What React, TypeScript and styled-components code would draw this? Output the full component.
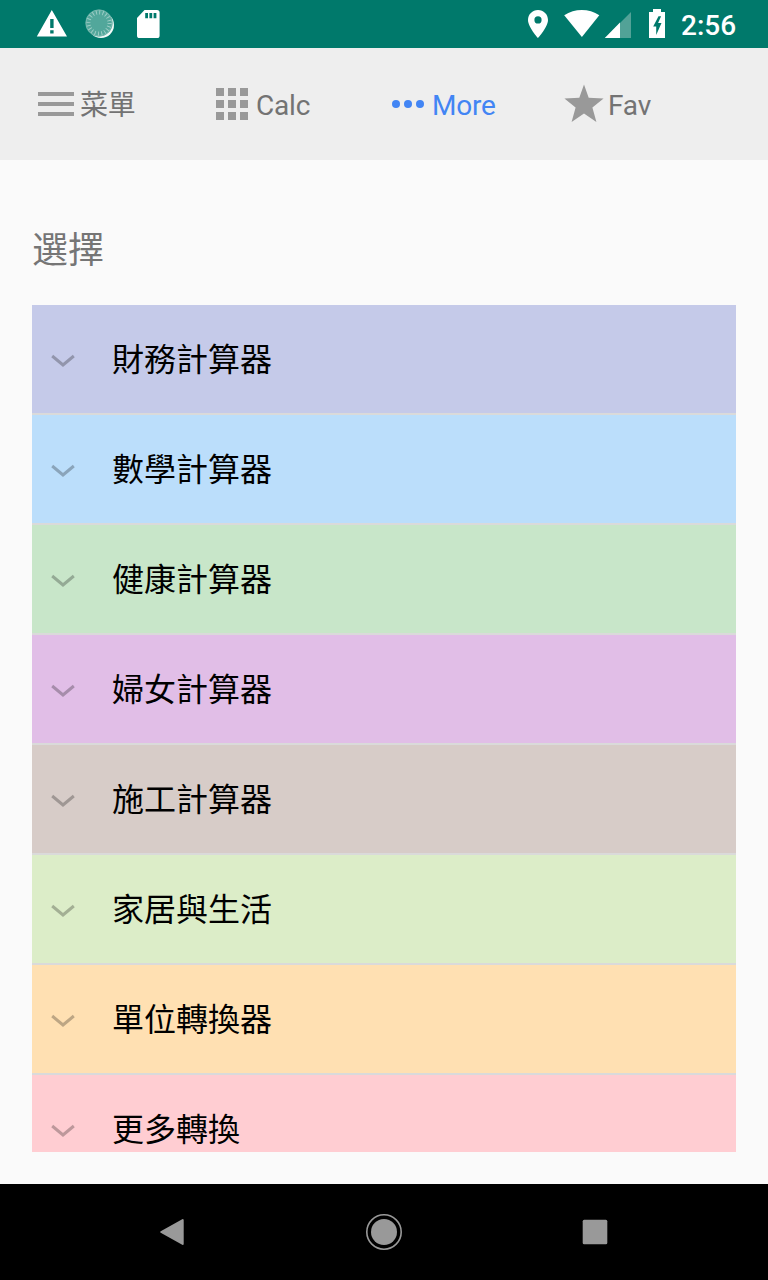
import React from "react";
import styled, { createGlobalStyle } from "styled-components";

const GlobalStyle = createGlobalStyle`
  * { box-sizing: border-box; }
  html, body { margin: 0; padding: 0; background: #fafafa; }
  body { font-family: Roboto, "Noto Sans CJK SC", sans-serif; overflow: hidden; }
  svg { display: block; flex: none; }
`;

const Screen = styled.div`
  display: flex;
  flex-direction: column;
  width: 768px;
  height: 1280px;
  background: #fafafa;
`;

const StatusBar = styled.header`
  display: flex;
  flex: none;
  align-items: center;
  justify-content: space-between;
  height: 48px;
  padding: 0 32px 0 36px;
  background: #00796b;
  color: #fff;
`;

const StatusGroup = styled.div<{ $gap?: number }>`
  display: flex;
  align-items: center;
  gap: ${(p) => p.$gap ?? 0}px;
`;

const Clock = styled.span`
  width: 55px;
  margin-left: 13px;
  padding-top: 3px;
  font-size: 28px;
  line-height: 32px;
  font-weight: 500;
  white-space: nowrap;
`;

const TabBar = styled.nav`
  display: flex;
  flex: none;
  height: 112px;
  padding-left: 32px;
  background: #eeeeee;
`;

const Tab = styled.div<{ $active?: boolean }>`
  display: flex;
  align-items: center;
  width: 176px;
  color: ${(p) => (p.$active ? "#4285f4" : "#737373")};
`;

const TabLabel = styled.span`
  padding-top: 3px;
  font-size: 28px;
  line-height: 40px;
  letter-spacing: -0.2px;
  white-space: nowrap;
`;

const Content = styled.main`
  display: flex;
  flex: 1;
  flex-direction: column;
  min-height: 0;
  padding: 62px 32px 32px;
`;

const Heading = styled.h1`
  flex: none;
  height: 83px;
  margin: 0;
  color: #757575;
  font-size: 36px;
  line-height: 58px;
  font-weight: 400;
`;

const List = styled.div`
  flex: 1;
  min-height: 0;
  overflow: hidden;
`;

const Row = styled.div<{ $color: string }>`
  display: flex;
  align-items: center;
  height: 110px;
  padding-left: 19px;
  border-bottom: 2px solid #dadada;
  background: ${(p) => p.$color};
`;

const RowLabel = styled.span`
  margin-left: 37px;
  padding-top: 2px;
  color: #000;
  font-size: 32px;
  line-height: 48px;
`;

const NavBar = styled.footer`
  display: flex;
  flex: none;
  align-items: center;
  justify-content: space-between;
  height: 96px;
  padding: 0 152px;
  background: #000;
`;

const WarningIcon = () => (
  <svg width="32" height="32" viewBox="0 0 32 32">
    <path fill="#fff" fillRule="evenodd" d="M15.8 2 31 28.4H.8ZM14.2 11v9h3.4v-9ZM14.2 22.2v3.4h3.4v-3.4Z" />
  </svg>
);

const SyncIcon = () => (
  <svg width="32" height="32" viewBox="0 0 32 32">
    <circle cx="17" cy="17" r="13" fill="#f2faf8" />
    <circle cx="15" cy="15" r="13.6" fill="#52a79b" />
    <circle cx="15" cy="15" r="10.7" fill="none" stroke="#a3d0c9" strokeWidth="4.4" strokeDasharray="0.9 2.46" />
    <circle cx="15" cy="15" r="13" fill="none" stroke="#7dbab1" strokeWidth="0.8" />
  </svg>
);

const SdIcon = () => (
  <svg width="32" height="32" viewBox="0 0 32 32">
    <path fill="#fff" fillRule="evenodd" d="M12.5 2H25a2.6 2.6 0 0 1 2.6 2.6v22.8A2.6 2.6 0 0 1 25 30H7.6A2.6 2.6 0 0 1 5 27.4V10ZM13.2 5v5.2h2.8V5ZM17.4 5v5.2h2.8V5ZM21.6 5v5.2h2.8V5Z" />
  </svg>
);

const PinIcon = () => (
  <svg width="20" height="32" viewBox="0 0 20 32">
    <path fill="#fff" fillRule="evenodd" d="M10 2C4.4 2 0 6.4 0 12c0 7.2 10 18 10 18s10-10.8 10-18C20 6.4 15.6 2 10 2Zm0 13.5a3.6 3.6 0 1 1 0-7.2 3.6 3.6 0 0 1 0 7.2Z" />
  </svg>
);

const WifiSvg = styled.svg`
  margin-left: 16px;
`;

const WifiIcon = () => (
  <WifiSvg width="36" height="32" viewBox="0 0 36 32">
    <path fill="#fff" d="M.2 7.3C10.7.3 25 .3 35.3 7.3L17.9 29Z" />
  </WifiSvg>
);

const SignalSvg = styled.svg`
  margin-left: 4px;
`;

const SignalIcon = () => (
  <SignalSvg width="28" height="32" viewBox="0 0 28 32">
    <path fill="#52a297" d="M27 4v26H1Z" />
    <path fill="#fff" d="M16 14.5V30H.8Z" />
  </SignalSvg>
);

const BatterySvg = styled.svg`
  margin-left: 16px;
`;

const BatteryIcon = () => (
  <BatterySvg width="20" height="32" viewBox="0 0 20 32">
    <path fill="#fff" fillRule="evenodd" d="M5 1h8v3h4v26H1V4h4ZM10.5 8.2 5.2 18.5h3V27L13.5 15h-3.4l3-6.8Z" />
  </BatterySvg>
);

const MenuIcon = () => (
  <svg width="48" height="48" viewBox="0 0 48 48">
    <path fill="#999" d="M6 12h36v4H6zM6 22h36v4H6zM6 32h36v4H6z" />
  </svg>
);

const GridIcon = () => (
  <svg width="48" height="48" viewBox="0 0 48 48">
    {[8, 20, 32].map((y) =>
      [8, 20, 32].map((x) => <rect key={`${x}-${y}`} x={x} y={y} width="8" height="8" fill="#999" />)
    )}
  </svg>
);

const DotsIcon = () => (
  <svg width="48" height="48" viewBox="0 0 48 48">
    {[12, 24, 36].map((x) => (
      <circle key={x} cx={x} cy="24" r="4" fill="#4285f4" />
    ))}
  </svg>
);

const StarIcon = () => (
  <svg width="48" height="48" viewBox="0 0 48 48">
    <path fill="#999" d="M24 4.5 28.7 17.7 43.6 18.4 32.4 27.4 36.4 42 24 33.6 11.6 42 15.6 27.4 4.4 18.4 19.3 17.7Z" />
  </svg>
);

const ChevronSvg = styled.svg`
  margin-top: 4px;
`;

const ChevronIcon = () => (
  <ChevronSvg width="24" height="16" viewBox="0 0 24 16">
    <path fill="none" stroke="#000" strokeOpacity="0.26" strokeWidth="3" d="m1.2 3 10.8 9L22.8 3" />
  </ChevronSvg>
);

const BackIcon = () => (
  <svg width="40" height="40" viewBox="0 0 40 40">
    <path fill="#999" stroke="#999" strokeWidth="2" strokeLinejoin="round" d="M9.2 20 30.7 8v24Z" />
  </svg>
);

const HomeIcon = () => (
  <svg width="40" height="40" viewBox="0 0 40 40">
    <circle cx="20" cy="20" r="13" fill="#999" />
    <circle cx="20" cy="20" r="17.2" fill="none" stroke="#999" strokeWidth="1.6" />
  </svg>
);

const RecentIcon = () => (
  <svg width="40" height="40" viewBox="0 0 40 40">
    <rect x="6.7" y="7.8" width="24.6" height="24.5" rx="1.5" fill="#999" />
  </svg>
);

const categories = [
  { label: "財務計算器", color: "#c5cae9" },
  { label: "數學計算器", color: "#bbdefb" },
  { label: "健康計算器", color: "#c8e6c9" },
  { label: "婦女計算器", color: "#e1bee7" },
  { label: "施工計算器", color: "#d7ccc8" },
  { label: "家居與生活", color: "#dcedc8" },
  { label: "單位轉換器", color: "#ffe0b2" },
  { label: "更多轉換", color: "#ffcdd2" },
];

const tabs = [
  { label: "菜單", Icon: MenuIcon },
  { label: "Calc", Icon: GridIcon },
  { label: "More", Icon: DotsIcon, active: true },
  { label: "Fav", Icon: StarIcon },
];

export default function App() {
  return (
    <Screen>
      <GlobalStyle />
      <StatusBar>
        <StatusGroup $gap={16}>
          <WarningIcon />
          <SyncIcon />
          <SdIcon />
        </StatusGroup>
        <StatusGroup>
          <PinIcon />
          <WifiIcon />
          <SignalIcon />
          <BatteryIcon />
          <Clock>2:56</Clock>
        </StatusGroup>
      </StatusBar>
      <TabBar>
        {tabs.map(({ label, Icon, active }) => (
          <Tab key={label} $active={active}>
            <Icon />
            <TabLabel>{label}</TabLabel>
          </Tab>
        ))}
      </TabBar>
      <Content>
        <Heading>選擇</Heading>
        <List>
          {categories.map(({ label, color }) => (
            <Row key={label} $color={color}>
              <ChevronIcon />
              <RowLabel>{label}</RowLabel>
            </Row>
          ))}
        </List>
      </Content>
      <NavBar>
        <BackIcon />
        <HomeIcon />
        <RecentIcon />
      </NavBar>
    </Screen>
  );
}
